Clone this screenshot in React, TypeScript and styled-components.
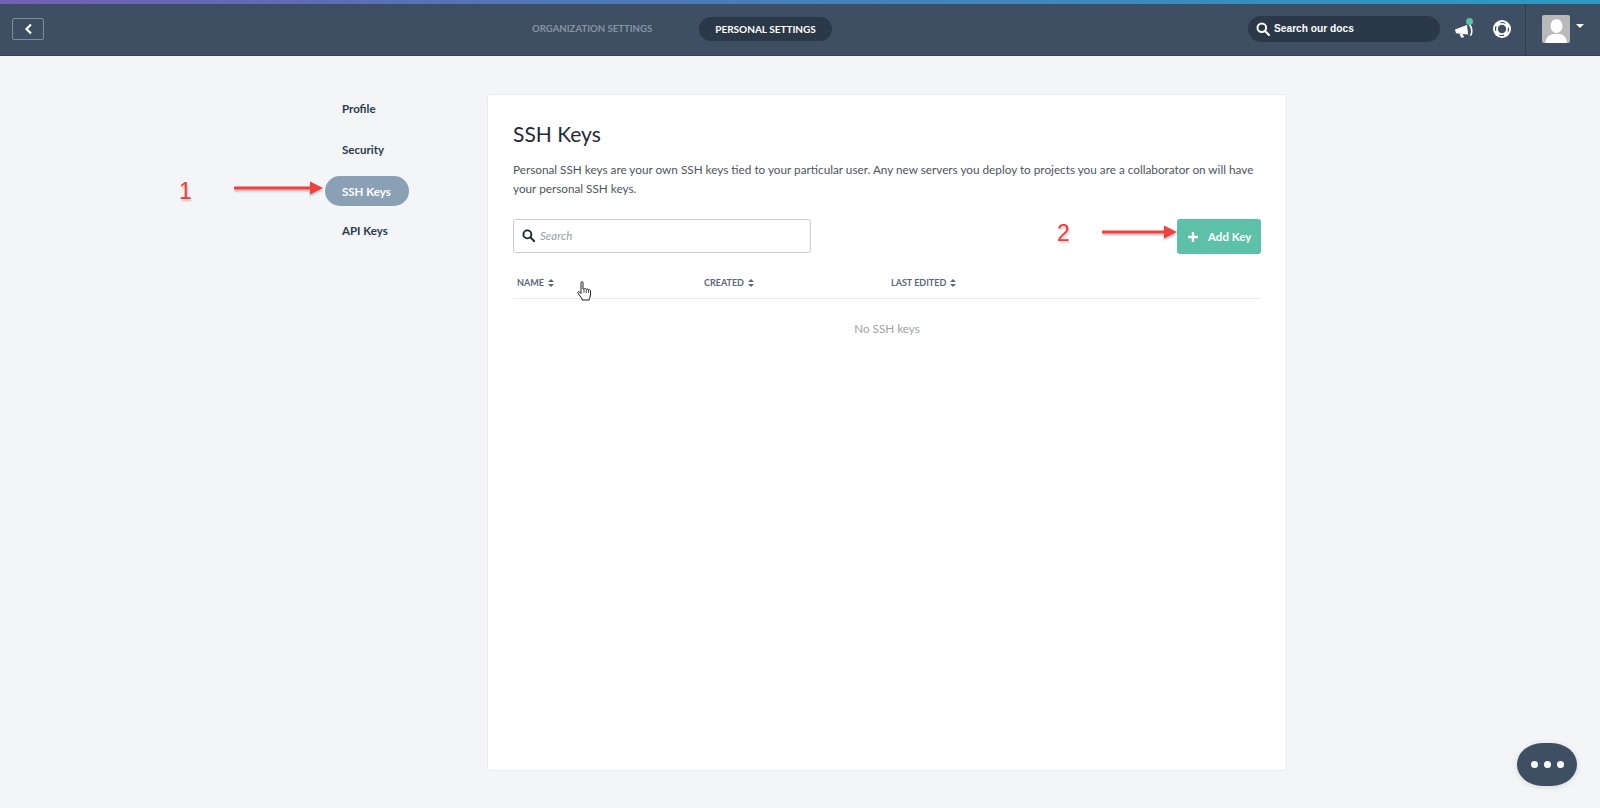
import React from "react";
import styled, { createGlobalStyle } from "styled-components";

const GlobalStyle = createGlobalStyle`
  html, body {
    margin: 0;
    height: 100%;
    background: #f3f5f7;
    font-family: "Lato", "Open Sans", sans-serif;
    color: #2d3b4c;
    overflow: hidden;
  }
`;

const Page = styled.div`
  position: relative;
  width: 1600px;
  height: 808px;
  overflow: hidden;
`;

const TopBar = styled.header`
  height: 56px;
  box-sizing: border-box;
  display: flex;
  align-items: center;
  padding: 3px 0 1px 12px;
  background: #3e4e63;
  border-bottom: 1px solid #33404f;
  position: relative;

  &::before {
    content: "";
    position: absolute;
    top: 0;
    left: 0;
    right: 0;
    height: 3.5px;
    background: linear-gradient(90deg, #7360b5 0%, #4a7ab8 40%, #2b9ac4 100%);
  }
`;

const BackButton = styled.button`
  width: 32px;
  height: 22px;
  padding: 0;
  display: flex;
  align-items: center;
  justify-content: center;
  background: transparent;
  border: 1px solid #808c9b;
  border-radius: 2px;
`;

const Tabs = styled.nav`
  display: flex;
  align-items: center;
  margin-left: 472px;
`;

const Tab = styled.div<{ $active?: boolean }>`
  height: 24px;
  display: flex;
  align-items: center;
  padding: 0 16px;
  border-radius: 12px;
  font-size: ${(p) => (p.$active ? "10px" : "9.6px")};
  font-weight: 700;
  white-space: nowrap;
  margin-left: ${(p) => (p.$active ? "31px" : "0")};
  color: ${(p) => (p.$active ? "#ffffff" : "#8793a3")};
  background: ${(p) => (p.$active ? "#2b3848" : "transparent")};
`;

const TopRight = styled.div`
  margin-left: auto;
  height: 100%;
  display: flex;
  align-items: center;
`;

const DocSearch = styled.div`
  width: 192px;
  height: 26px;
  box-sizing: border-box;
  display: flex;
  align-items: center;
  gap: 4px;
  padding-left: 8px;
  border-radius: 13px;
  background: #2b3848;
  color: #ffffff;
  font-family: "Liberation Sans", sans-serif;
  font-size: 10.2px;
  font-weight: 700;
`;

const HornWrap = styled.div`
  position: relative;
  margin: 4px 0 0 15px;
  width: 18px;
  height: 14px;
  line-height: 0;
`;

const HornDot = styled.span`
  position: absolute;
  top: -6px;
  left: 11px;
  width: 7px;
  height: 7px;
  border-radius: 50%;
  background: #5cc0a8;
`;

const HelpIcon = styled.div`
  margin: 1px 0 0 20px;
  line-height: 0;
`;

const UserBox = styled.div`
  margin-left: 14px;
  height: 52px;
  width: 75px;
  box-sizing: border-box;
  display: flex;
  align-items: center;
  padding-left: 16px;
  gap: 6px;
  border-left: 1px solid #2f3c4c;
`;

const Avatar = styled.div`
  width: 28px;
  height: 28px;
  border-radius: 2px;
  overflow: hidden;
  background: #b9b9b9;
  line-height: 0;
`;

const Caret = styled.span`
  width: 0;
  height: 0;
  margin-bottom: 6px;
  border-left: 4px solid transparent;
  border-right: 4px solid transparent;
  border-top: 4px solid #ffffff;
`;

const Body = styled.main`
  display: flex;
  align-items: flex-start;
  padding: 37px 0 0 325px;
`;

const Sidebar = styled.nav`
  width: 163px;
  margin-right: -1px;
  display: flex;
  flex-direction: column;
  align-items: flex-start;
  gap: 11px;
`;

const SideItem = styled.div<{ $active?: boolean }>`
  height: 30px;
  display: flex;
  align-items: center;
  padding: 0 18px 0 17px;
  border-radius: 15px;
  font-size: 11.5px;
  font-weight: 700;
  margin-top: ${(p) => (p.$active ? "1px" : "0")};
  margin-bottom: ${(p) => (p.$active ? "-2px" : "0")};
  color: ${(p) => (p.$active ? "#ffffff" : "#2a3a4e")};
  background: ${(p) => (p.$active ? "#8aa0b5" : "transparent")};
`;

const Card = styled.section`
  width: 800px;
  height: 677px;
  margin-top: 1px;
  box-sizing: border-box;
  padding: 27px 25px 0;
  background: #ffffff;
  border: 1px solid #e9ecef;
  border-radius: 3px;
`;

const Title = styled.h1`
  margin: 0;
  font-size: 21px;
  line-height: 24px;
  font-weight: 400;
  color: #1f2a36;
`;

const Intro = styled.p`
  margin: 14px 0 0;
  width: 746px;
  font-size: 11.75px;
  line-height: 19px;
  color: #4b5560;
`;

const Controls = styled.div`
  margin-top: 21px;
  display: flex;
  align-items: flex-start;
  justify-content: space-between;
`;

const SearchBox = styled.div`
  width: 298px;
  height: 34px;
  box-sizing: border-box;
  display: flex;
  align-items: center;
  gap: 5px;
  padding: 0 0 1px 8px;
  border: 1px solid #c9ccd0;
  border-radius: 3px;
  font-size: 11.5px;
  font-style: italic;
  color: #9a9fa6;
`;

const AddButton = styled.button`
  width: 84px;
  height: 35px;
  display: flex;
  align-items: center;
  gap: 10px;
  padding: 0 0 0 11px;
  border: 0;
  border-radius: 3px;
  background: #5dc0a9;
  color: #ffffff;
  font-family: inherit;
  font-size: 11.5px;
  font-weight: 700;
`;

const TableHead = styled.div`
  margin-top: 13px;
  height: 32px;
  box-sizing: border-box;
  display: grid;
  grid-template-columns: 187px 187px 1fr;
  align-items: center;
  padding: 0 0 0 4px;
  border-bottom: 1px solid #e9ebee;
`;

const HeadCell = styled.div`
  display: flex;
  align-items: center;
  gap: 4px;
  font-size: 9px;
  font-weight: 700;
  color: #5b6678;
`;

const EmptyNote = styled.div`
  margin-top: 22px;
  text-align: center;
  font-size: 11.7px;
  color: #9ea3a9;
`;

const Annotation = styled.div<{ $x: number; $y: number }>`
  position: absolute;
  left: ${(p) => p.$x}px;
  top: ${(p) => p.$y}px;
  line-height: 0;
`;

const StepNumber = styled.span`
  display: block;
  font-family: "Liberation Sans", sans-serif;
  font-size: 23px;
  line-height: 24px;
  color: #f13a3a;
  text-shadow: 1px 2px 2px rgba(0, 0, 0, 0.2);
`;

const ChatBubble = styled.div`
  position: absolute;
  left: 1517px;
  top: 743px;
  width: 60px;
  height: 43px;
  display: flex;
  align-items: center;
  justify-content: center;
  gap: 6px;
  background: #3e4e63;
  border-radius: 26px / 22px;
  box-shadow: 0 1px 6px rgba(0, 0, 0, 0.12);
`;

const Dot = styled.span`
  width: 7px;
  height: 7px;
  border-radius: 50%;
  background: #ffffff;
`;

const SearchGlyph = ({ size, color }: { size: number; color: string }) => (
  <svg width={size} height={size} viewBox="0 0 14 14" fill="none">
    <circle cx="5.8" cy="5.8" r="4.3" stroke={color} strokeWidth="2" />
    <path d="M9 9l4 4" stroke={color} strokeWidth="2.2" strokeLinecap="round" />
  </svg>
);

const SortGlyph = () => (
  <svg width="6" height="8" viewBox="0 0 6 8" fill="#5b6678">
    <path d="M3 0l3 3H0zM3 8L0 5h6z" />
  </svg>
);

const Arrow = ({ width }: { width: number }) => (
  <svg width={width} height="18" viewBox={`0 0 ${width} 18`} fill="none">
    <defs>
      <filter id="arrowShadow" x="-5%" y="-40%" width="110%" height="200%">
        <feDropShadow dx="0" dy="1.5" stdDeviation="1" floodColor="#000" floodOpacity="0.3" />
      </filter>
    </defs>
    <g filter="url(#arrowShadow)">
      <path d={`M1 8h${width - 14}`} stroke="#f0413f" strokeWidth="3" strokeLinecap="round" />
      <path d={`M${width - 14} 1.5L${width - 1} 8L${width - 14} 14.5z`} fill="#f0413f" />
    </g>
  </svg>
);

const Megaphone = () => (
  <svg width="18" height="14" viewBox="0 0 18 14" fill="#ffffff">
    <path d="M0 5.500L12 1l1.200 9.500L1 9.300z" />
    <path d="M4.500 9.800l1.500 3.700h3L7.800 10z" />
    <path d="M14.500 .5c1.700 0 2.800 2.500 3 5.500s-.5 5.500-1.800 6l-1-.6c1-.8 1.400-3 1.200-5.200s-1-4.200-2-4.800z" />
  </svg>
);

// dark arcs sit on the top/right/bottom/left of the ring, the rest stays white
const LifeRing = () => (
  <svg width="18" height="18" viewBox="0 0 18 18" fill="none">
    <circle cx="9" cy="9" r="9" fill="#ffffff" />
    <circle cx="9" cy="9" r="6.500" stroke="#3e4e63" strokeWidth="1.200" strokeDasharray="5 5.200" strokeDashoffset="2.500" />
    <circle cx="9" cy="9" r="4.200" fill="#3e4e63" />
  </svg>
);

const HandCursor = () => (
  <svg width="15" height="20" viewBox="0 0 15 20">
    <path
      d="M4 1.500c0-1 2-1 2 0V8l1 0c1-.6 2-.4 2.300.2 1-.5 2-.2 2.200.5 1-.3 2 .2 2 1.200V14c0 1.500-.8 2.600-1.300 3.800v1.200H5v-1.400C3.600 15.800 2.200 14 .9 11.900c-.6-1.100.8-1.900 1.600-1L4 12.500z"
      fill="#ffffff"
      stroke="#222"
      strokeWidth="1"
      strokeLinejoin="round"
    />
    <path d="M7 8.500v3.500M9.300 8.500v3.500M11.500 9v3" stroke="#222" strokeWidth="0.8" />
  </svg>
);

export default function App() {
  return (
    <Page>
      <GlobalStyle />
      <TopBar>
        <BackButton aria-label="Back">
          <svg width="9" height="12" viewBox="0 0 9 12" fill="none">
            <path d="M7 1.500L2.500 6 7 10.500" stroke="#fff" strokeWidth="2.200" />
          </svg>
        </BackButton>
        <Tabs>
          <Tab>ORGANIZATION SETTINGS</Tab>
          <Tab $active>PERSONAL SETTINGS</Tab>
        </Tabs>
        <TopRight>
          <DocSearch>
            <SearchGlyph size={14} color="#ffffff" />
            Search our docs
          </DocSearch>
          <HornWrap>
            <Megaphone />
            <HornDot />
          </HornWrap>
          <HelpIcon>
            <LifeRing />
          </HelpIcon>
          <UserBox>
            <Avatar>
              <svg width="28" height="28" viewBox="0 0 28 28" fill="#fff">
                <ellipse cx="14.500" cy="11" rx="6" ry="7" />
                <path d="M3.500 28c0-6 4-8 7-9h8c3 1 6 3 6.500 9z" />
              </svg>
            </Avatar>
            <Caret />
          </UserBox>
        </TopRight>
      </TopBar>

      <Body>
        <Sidebar>
          <SideItem>Profile</SideItem>
          <SideItem>Security</SideItem>
          <SideItem $active>SSH Keys</SideItem>
          <SideItem>API Keys</SideItem>
        </Sidebar>
        <Card>
          <Title>SSH Keys</Title>
          <Intro>
            Personal SSH keys are your own SSH keys tied to your particular user. Any new servers you deploy to projects
            you are a collaborator on will have your personal SSH keys.
          </Intro>
          <Controls>
            <SearchBox>
              <SearchGlyph size={13} color="#1c2530" />
              Search
            </SearchBox>
            <AddButton>
              <svg width="10" height="10" viewBox="0 0 10 10" fill="#fff">
                <path d="M3.800 0h2.400v3.800H10v2.400H6.200V10H3.800V6.200H0V3.800h3.800z" />
              </svg>
              Add Key
            </AddButton>
          </Controls>
          <TableHead>
            <HeadCell>
              NAME <SortGlyph />
            </HeadCell>
            <HeadCell>
              CREATED <SortGlyph />
            </HeadCell>
            <HeadCell>
              LAST EDITED <SortGlyph />
            </HeadCell>
          </TableHead>
          <EmptyNote>No SSH keys</EmptyNote>
        </Card>
      </Body>

      <Annotation $x={179} $y={179}>
        <StepNumber>1</StepNumber>
      </Annotation>
      <Annotation $x={234} $y={180}>
        <Arrow width={90} />
      </Annotation>
      <Annotation $x={1057} $y={221}>
        <StepNumber>2</StepNumber>
      </Annotation>
      <Annotation $x={1102} $y={224}>
        <Arrow width={76} />
      </Annotation>
      <Annotation $x={577} $y={281}>
        <HandCursor />
      </Annotation>

      <ChatBubble>
        <Dot />
        <Dot />
        <Dot />
      </ChatBubble>
    </Page>
  );
}
